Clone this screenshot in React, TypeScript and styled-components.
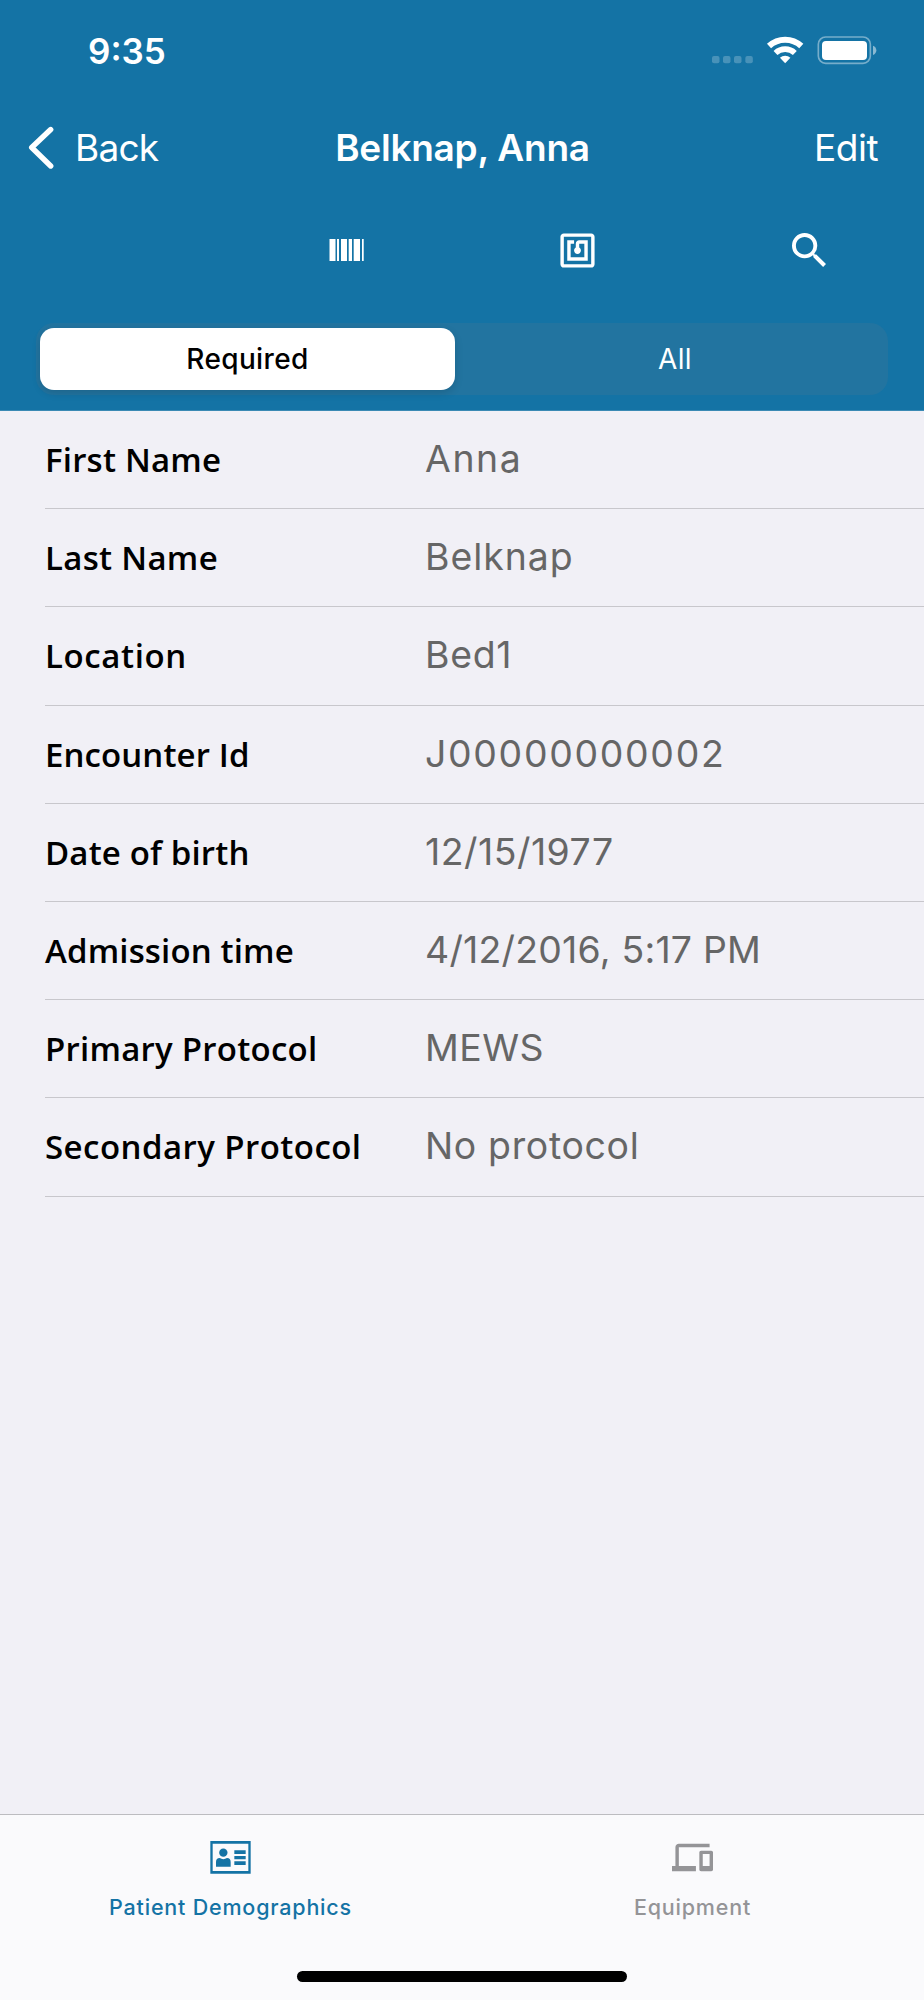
import React from "react";
import styled, { createGlobalStyle } from "styled-components";

const GlobalStyle = createGlobalStyle`
  * { box-sizing: border-box; }
  body { margin: 0; background: #f1f0f6; }
`;

const systemFont = `Inter, "Liberation Sans", sans-serif`;
const brandFont = `"Open Sans", "Noto Sans", sans-serif`;

const Screen = styled.div`
  display: flex;
  flex-direction: column;
  width: 924px;
  height: 2000px;
  background: #f1f0f6;
  font-family: ${systemFont};
  overflow: hidden;
`;

const Header = styled.header`
  display: flex;
  flex-direction: column;
  flex: none;
  height: 411px;
  background: #1473a5;
  color: #fff;
  border-bottom: 1px solid #3b8ab4;
`;

const StatusBar = styled.div`
  display: flex;
  justify-content: space-between;
  height: 100px;
  padding: 29px 47px 0 88px;
`;

const Clock = styled.span`
  font-size: 35px;
  line-height: 44px;
  font-weight: 600;
`;

const StatusIcons = styled.svg`
  width: 166px;
  height: 30px;
  margin-top: 7px;
`;

const NavBar = styled.nav`
  display: grid;
  grid-template-columns: 1fr auto 1fr;
  align-items: center;
  height: 96px;
  padding: 0 27px 0 28px;
`;

const NavButton = styled.button<{ $end?: boolean }>`
  display: flex;
  align-items: center;
  justify-self: ${(p) => (p.$end ? "end" : "start")};
  gap: 20px;
  padding: 0 ${(p) => (p.$end ? 19 : 0)}px 0 0;
  border: 0;
  background: none;
  color: inherit;
  font: 400 37px/46px ${systemFont};
  letter-spacing: ${(p) => (p.$end ? -0.5 : -0.8)}px;
`;

const Title = styled.h1`
  margin: 0;
  font-size: 37px;
  line-height: 46px;
  font-weight: 600;
  letter-spacing: -0.25px;
`;

const ToolBar = styled.div`
  display: grid;
  grid-template-columns: repeat(4, 1fr);
  justify-items: center;
  align-items: center;
  height: 108px;
`;

const Tool = styled.svg<{ $w: number; $h: number }>`
  width: ${(p) => p.$w}px;
  height: ${(p) => p.$h}px;
  fill: #fff;
`;

const Segments = styled.div`
  display: grid;
  grid-template-columns: 415px 1fr;
  width: 852px;
  height: 72px;
  margin: 19px 0 0 36px;
  padding: 5px 4px;
  border-radius: 18px;
  background: #2274a0;
`;

const Segment = styled.button<{ $on?: boolean }>`
  padding: ${(p) => (p.$on ? "0" : "0 0 0 11px")};
  border: 0;
  border-radius: 14px;
  background: ${(p) => (p.$on ? "#fff" : "transparent")};
  color: ${(p) => (p.$on ? "#000" : "#fff")};
  box-shadow: ${(p) => (p.$on ? "0 3px 8px rgba(0,0,0,0.14)" : "none")};
  font: ${(p) => (p.$on ? 500 : 400)} 28px/62px ${systemFont};
  letter-spacing: 0.35px;
`;

const Fields = styled.dl`
  flex: 1;
  margin: 0;
  padding-left: 45px;
`;

const Field = styled.div`
  display: grid;
  grid-template-columns: 380px 1fr;
  align-items: baseline;
  height: 98.2px;
  padding-top: 23px;
  border-bottom: 1px solid #c8c7cc;
`;

const Label = styled.dt<{ $track: number }>`
  font-family: ${brandFont};
  font-size: 33px;
  line-height: 50px;
  font-weight: 600;
  color: #000;
  white-space: nowrap;
  letter-spacing: ${(p) => p.$track}px;
`;

const Value = styled.dd<{ $track: number }>`
  margin: 0;
  font-size: 37.4px;
  line-height: 50px;
  font-weight: 400;
  color: #666;
  white-space: nowrap;
  letter-spacing: ${(p) => p.$track}px;
`;

const TabBar = styled.footer`
  display: grid;
  grid-template-columns: 1fr 1fr;
  grid-template-rows: 1fr auto;
  justify-items: center;
  flex: none;
  height: 186px;
  background: #fafafc;
  border-top: 1px solid #bcbcc0;
`;

const Tab = styled.button<{ $on?: boolean }>`
  display: flex;
  flex-direction: column;
  align-items: center;
  padding: 22px 1px 0 0;
  border: 0;
  background: none;
  color: ${(p) => (p.$on ? "#1473a5" : "#949497")};
  font: 500 21.5px/28px ${systemFont};
  letter-spacing: 0.8px;
`;

const TabIcon = styled.svg`
  width: 41px;
  height: 41px;
  margin-bottom: 15px;
  fill: currentColor;
`;

const HomeIndicator = styled.div`
  grid-column: 1 / -1;
  width: 330px;
  height: 11px;
  margin-bottom: 18px;
  border-radius: 6px;
  background: #000;
`;

const fields = [
  { label: "First Name", value: "Anna", lt: 0.2, vt: 1.6 },
  { label: "Last Name", value: "Belknap", lt: 0.3, vt: 0.95 },
  { label: "Location", value: "Bed1", lt: 0.6, vt: 0.7 },
  { label: "Encounter Id", value: "J00000000002", lt: 0.1, vt: 1.7 },
  { label: "Date of birth", value: "12/15/1977", lt: 0.15, vt: 0.5 },
  { label: "Admission time", value: "4/12/2016, 5:17 PM", lt: 0.15, vt: 0.23 },
  { label: "Primary Protocol", value: "MEWS", lt: 0.25, vt: 0.5 },
  { label: "Secondary Protocol", value: "No protocol", lt: 0.45, vt: 0.67 },
];

export default function App() {
  return (
    <Screen>
      <GlobalStyle />
      <Header>
        <StatusBar>
          <Clock>9:35</Clock>
          <StatusIcons viewBox="747 108 498 90" fill="#fff">
            <g opacity="0.22">
              {[750, 783, 816, 850].map((x) => (
                <rect key={x} x={x} y="168" width="22.5" height="22" rx="6" />
              ))}
            </g>
            <g fill="none" stroke="#fff" strokeWidth="18">
              <path d="M921.1 138.1A71 71 0 0 1 1017.9 138.1" />
              <path d="M940.5 158.9A42.5 42.5 0 0 1 998.5 158.9" strokeWidth="17" />
            </g>
            <path d="M969.5 190L953.8 173.5A23 23 0 0 1 985.2 173.5Z" />
            <rect x="1069" y="111" width="156" height="79" rx="22" fill="none" stroke="#fff" strokeWidth="5" opacity="0.42" />
            <rect x="1080" y="123" width="135" height="57" rx="12" />
            <path d="M1233 137Q1243 141 1243 151T1233 165Z" opacity="0.5" />
          </StatusIcons>
        </StatusBar>
        <NavBar>
          <NavButton>
            <svg width="27" height="44" viewBox="0 0 27 44" fill="none" stroke="#fff" strokeWidth="5.4" strokeLinecap="round" strokeLinejoin="round">
              <path d="M22.7 3.5L3.7 21.5L22.7 40" />
            </svg>
            Back
          </NavButton>
          <Title>Belknap, Anna</Title>
          <NavButton $end>Edit</NavButton>
        </NavBar>
        <ToolBar>
          <span />
          <Tool $w={35} $h={22} viewBox="0 0 35 22">
            <path d="M.5 0h6v22h-6zM8 0h2v22H8zM12 0h6v22h-6zM19.7 0h3.3v22h-3.3zM24.7 0h6.3v22h-6.3zM33 0h1.7v22H33z" />
          </Tool>
          <Tool $w={41} $h={41} viewBox="0 0 24 24">
            <path d="M20 2H4c-1.1 0-2 .9-2 2v16c0 1.1.9 2 2 2h16c1.1 0 2-.9 2-2V4c0-1.1-.9-2-2-2zm0 18H4V4h16v16zM18 6h-5c-1.1 0-2 .9-2 2v2.28c-.6.35-1 .98-1 1.72 0 1.1.9 2 2 2s2-.9 2-2c0-.74-.4-1.38-1-1.72V8h3v8H8V8h2V6H6v12h12V6z" />
          </Tool>
          <Tool $w={34} $h={34} viewBox="3 3 17.49 17.49">
            <path d="M15.5 14h-.79l-.28-.27A6.471 6.471 0 0 0 16 9.5 6.5 6.5 0 1 0 9.5 16c1.61 0 3.09-.59 4.23-1.57l.27.28v.79l5 4.99L20.49 19l-4.99-5zm-6 0C7.01 14 5 11.99 5 9.5S7.01 5 9.5 5 14 7.01 14 9.5 11.99 14 9.5 14z" />
          </Tool>
        </ToolBar>
        <Segments>
          <Segment $on>Required</Segment>
          <Segment>All</Segment>
        </Segments>
      </Header>
      <Fields>
        {fields.map((f) => (
          <Field key={f.label}>
            <Label $track={f.lt}>{f.label}</Label>
            <Value $track={f.vt}>{f.value}</Value>
          </Field>
        ))}
      </Fields>
      <TabBar>
        <Tab $on>
          <TabIcon viewBox="630 139 123 123">
            <path d="M631 151h121v98H631zm7 8v82h107v-82z" fillRule="evenodd" />
            <circle cx="670" cy="186" r="12.5" />
            <path d="M648 228v-14q0-12 11-12q11 7 22 0q11 0 11 12v14zM703 179h34v11h-34zM703 196h34v10h-34zM703 212h34v11h-34z" />
          </TabIcon>
          Patient Demographics
        </Tab>
        <Tab>
          <TabIcon viewBox="0 0 24 24">
            <path d="M4 6h18V4H4c-1.1 0-2 .9-2 2v11H0v3h14v-3H4V6zm19 2h-6c-.55 0-1 .45-1 1v10c0 .55.45 1 1 1h6c.55 0 1-.45 1-1V9c0-.55-.45-1-1-1zm-1 9h-4v-7h4v7z" />
          </TabIcon>
          Equipment
        </Tab>
        <HomeIndicator />
      </TabBar>
    </Screen>
  );
}
